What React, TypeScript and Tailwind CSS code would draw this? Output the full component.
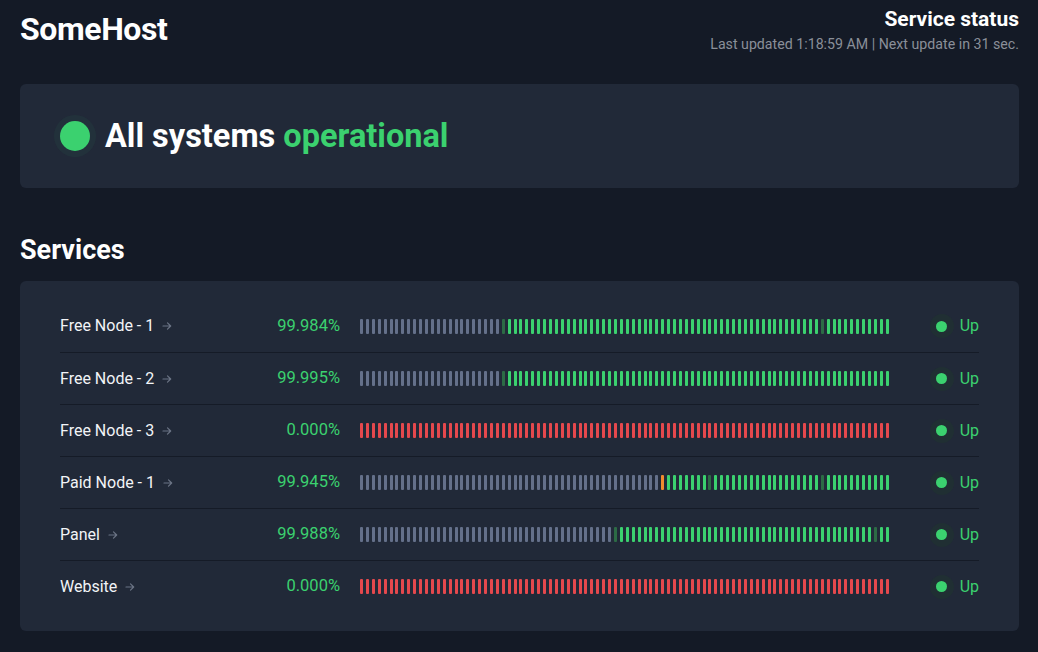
import React from 'react';

type Beat = 'g' | 'd' | 'n' | 'r' | 'o';

const C: Record<Beat, string> = {
  g: 'bg-[#3bd16f]',
  d: 'bg-[#2c6b45]',
  n: 'bg-[#64708a]',
  r: 'bg-[#e5484d]',
  o: 'bg-[#f08c2e]',
};

function beats(grey: number, marks: Record<number, Beat> = {}, fill: Beat = 'g'): Beat[] {
  return Array.from({ length: 90 }, (_, i) => (marks[i] ? marks[i] : i < grey ? 'n' : fill));
}

const SERVICES = [
  { name: 'Free Node - 1', uptime: '99.984%', bars: beats(24, { 24: 'd', 78: 'd' }) },
  { name: 'Free Node - 2', uptime: '99.995%', bars: beats(24, { 24: 'd' }) },
  { name: 'Free Node - 3', uptime: '0.000%', bars: beats(0, {}, 'r') },
  { name: 'Paid Node - 1', uptime: '99.945%', bars: beats(51, { 51: 'o', 59: 'd', 78: 'd' }) },
  { name: 'Panel', uptime: '99.988%', bars: beats(43, { 43: 'd', 87: 'd' }) },
  { name: 'Website', uptime: '0.000%', bars: beats(0, {}, 'r') },
];

const Arrow = () => (
  <svg width="10" height="10" viewBox="0 0 10 10" fill="none" stroke="#6b7485" strokeWidth="1.2" strokeLinecap="round" strokeLinejoin="round">
    <path d="M1 5h7.5M5.5 1.8 8.7 5 5.5 8.2" />
  </svg>
);

export default function App() {
  return (
    <div className="min-h-[652px] bg-[#141a26] font-['Roboto',sans-serif] text-white">
      <div className="mx-auto w-[1000px] pl-px">
        <header className="flex items-start justify-between pt-[7px]">
          <h1 className="mt-1 text-[32px] font-bold leading-[36px] tracking-[-0.4px]">SomeHost</h1>
          <div className="text-right">
            <div className="text-[21px] font-bold leading-[24px]">Service status</div>
            <div className="mt-[5px] text-[14.2px] leading-[16px] text-[#8a8f99]">
              Last updated 1:18:59 AM | Next update in 31 sec.
            </div>
          </div>
        </header>

        <section className="mt-[32px] flex h-[104px] items-center rounded-md bg-[#212938] px-10">
          <span className="h-[30px] w-[30px] rounded-full bg-[#3bd16f] shadow-[0_0_0_6px_rgba(59,209,111,0.05)]" />
          <h2 className="ml-[15px] text-[32.5px] font-bold leading-none">
            All systems <span className="text-[#3bd16f]">operational</span>
          </h2>
        </section>

        <h2 className="mt-[46px] text-[27px] font-bold leading-[32px]">Services</h2>

        <section className="mt-[15px] rounded-md bg-[#212938] px-10 py-[19px]">
          {SERVICES.map((s, i) => (
            <div
              key={s.name}
              className={`flex h-[52px] items-center ${i > 0 ? 'border-t border-[#151b27]' : ''}`}
            >
              <div className="flex w-[200px] items-center gap-[8px] text-[16px] text-[#f2f4f7]">
                {s.name}
                <Arrow />
              </div>
              <div className="w-[80px] text-right text-[16.5px] text-[#3bd16f]">{s.uptime}</div>
              <div className="ml-5 flex w-[530px] justify-between">
                {s.bars.map((b, j) => (
                  <span key={j} className={`h-[15px] w-[3px] rounded-[1px] ${C[b]}`} />
                ))}
              </div>
              <div className="ml-auto flex items-center">
                <span className="flex h-[24px] w-[24px] items-center justify-center rounded-full bg-[#1f3330]/60">
                  <span className="h-[11px] w-[11px] rounded-full bg-[#3bd16f]" />
                </span>
                <span className="ml-[6px] text-[16px] text-[#3bd16f]">Up</span>
              </div>
            </div>
          ))}
        </section>
      </div>
    </div>
  );
}
